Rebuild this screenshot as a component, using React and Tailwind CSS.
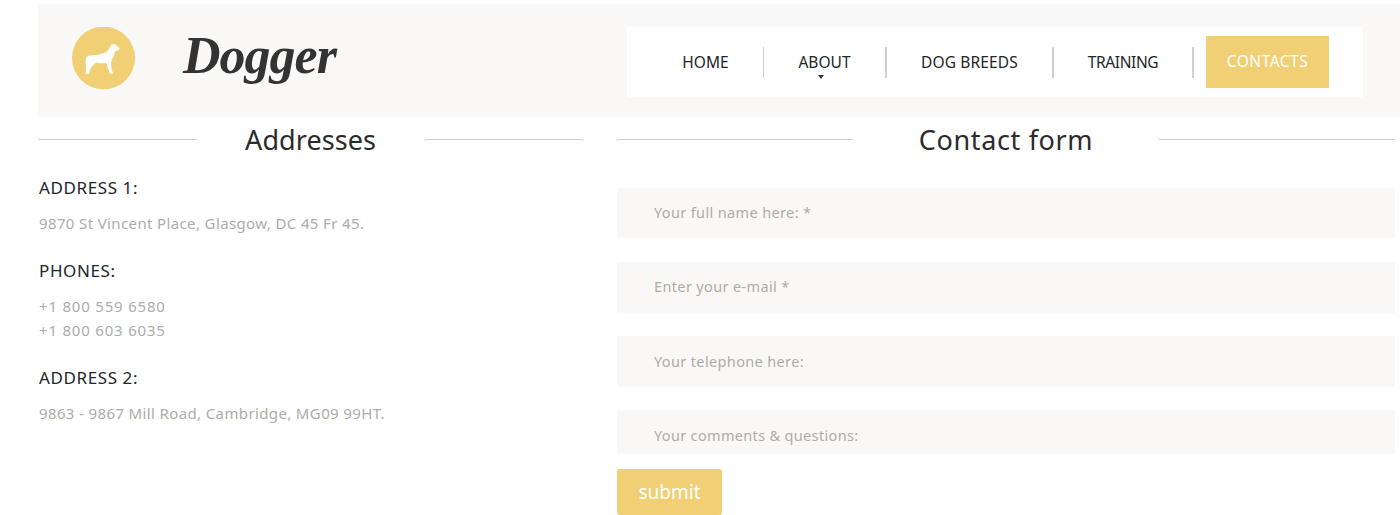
import React from "react";

const bodyFont = "font-['Noto_Sans','DejaVu_Sans',sans-serif]";

function DogLogo() {
  return (
    <svg width="64" height="64" viewBox="0 0 64 64" className="shrink-0">
      <circle cx="31.5" cy="31" r="31.5" fill="#f1cf74" />
      <path
        d="M39.5 17.5 C41.5 16.8 43.5 17.5 44.5 18.8 L47.5 21 C47.8 22.3 46.8 23 45.5 23.3 L43.2 24.2 C42.6 27 41.5 30 39.6 33 C39 36 39 40 39.8 43 L41.3 46.8 L38 46.8 C36.8 44 35.6 40.5 34 36 C31 36.6 27 36.5 24.5 35.2 C22.3 37 19.5 39.5 18.2 42 L17 47 L13.6 47 L14.2 41 C13.6 37 13.4 33.5 14 31 C15 28.8 17 28.3 20 28.2 C26 28.2 32 26.5 35.5 24 C36.8 22 38 19.5 39.5 17.5 Z"
        fill="#ffffff"
      />
    </svg>
  );
}

function NavLink({ label, width, tracking = "", caret }) {
  return (
    <a className={`${width} ${tracking} relative text-center text-[15.5px] leading-[20px] text-[#222529] whitespace-nowrap`}>
      {label}
      {caret && (
        <span className="absolute left-1/2 top-[23px] -ml-[7px] border-x-[3.5px] border-t-[4px] border-x-transparent border-t-[#333]" />
      )}
    </a>
  );
}

function Divider({ width = "w-[2px]" }) {
  return <span className={`${width} h-[31px] bg-[#cfcfcf]`} />;
}

function Heading({ children, gap, tracking }) {
  return (
    <div className="flex items-center h-[44px]">
      <span className="flex-1 h-px bg-[#cccccc]" />
      <h2 className={`${gap} ${tracking} pt-[2px] text-center text-[27px] leading-[44px] text-[#2b2b2b]`}>{children}</h2>
      <span className="flex-1 h-px bg-[#cccccc]" />
    </div>
  );
}

function Field({ placeholder, className }) {
  return (
    <input
      placeholder={placeholder}
      className={`w-full bg-[#f9f8f6] pl-[37px] text-[14.5px] tracking-[0.36px] outline-none placeholder:text-[#aeaca8] ${className}`}
    />
  );
}

export default function App() {
  return (
    <div className={`w-[1400px] h-[515px] overflow-hidden bg-white pt-1 pl-[38px] ${bodyFont}`}>
      <header className="flex items-start h-[113px] bg-[#f9f8f6] pt-[23px] pl-[34px] pr-[37px]">
        <DogLogo />
        <span className="ml-[47px] mt-[3px] font-['Liberation_Serif',serif] font-bold italic text-[52px] leading-none tracking-[-1px] text-[#333333]">
          Dogger
        </span>
        <nav className="ml-auto flex items-center w-[736px] h-[70px] bg-white pl-[21px]">
          <NavLink label="HOME" width="w-[115px]" />
          <Divider width="w-px" />
          <NavLink label="ABOUT" width="w-[121px]" caret />
          <Divider />
          <NavLink label="DOG BREEDS" width="w-[165px]" tracking="tracking-[0.15px]" />
          <Divider />
          <NavLink label="TRAINING" width="w-[138px]" tracking="tracking-[-0.4px]" />
          <Divider />
          <a className="ml-[12px] flex items-center justify-center w-[123px] h-[52px] bg-[#f1cf74] text-[15.5px] tracking-[0.5px] text-white">
            CONTACTS
          </a>
        </nav>
      </header>

      <div className="flex">
        <section className="w-[545px]">
          <Heading gap="w-[228px]" tracking="tracking-[0.05px]">Addresses</Heading>
          <div className="pl-px text-[#222529]">
            <h3 className="mt-[15px] text-[17px] leading-[24px] tracking-[0.6px]">ADDRESS 1:</h3>
            <p className="mt-[11px] text-[15px] leading-[24px] tracking-[0.37px] text-[#aeaca8]">9870 St Vincent Place, Glasgow, DC 45 Fr 45.</p>
            <h3 className="mt-[24px] text-[17px] leading-[24px] tracking-[0.6px]">PHONES:</h3>
            <p className="mt-[11px] text-[15px] leading-[24px] tracking-[0.8px] text-[#aeaca8]">
              +1 800 559 6580
              <br />
              +1 800 603 6035
            </p>
            <h3 className="mt-[24px] text-[17px] leading-[24px] tracking-[0.6px]">ADDRESS 2:</h3>
            <p className="mt-[11px] text-[15px] leading-[24px] tracking-[0.37px] text-[#aeaca8]">9863 - 9867 Mill Road, Cambridge, MG09 99HT.</p>
          </div>
        </section>

        <section className="ml-[34px] w-[778px]">
          <Heading gap="w-[306px]" tracking="tracking-[0.65px]">Contact form</Heading>
          <form className="flex flex-col mt-[27px]" onSubmit={(e) => e.preventDefault()}>
            <Field placeholder="Your full name here: *" className="h-[50px] pb-[2px]" />
            <Field placeholder="Enter your e-mail *" className="h-[51px] mt-[24px] pb-[3px]" />
            <Field placeholder="Your telephone here:" className="h-[51px] mt-[23px] pb-[2px]" />
            <textarea
              placeholder="Your comments & questions:"
              className="w-full h-[44px] mt-[23px] resize-none overflow-hidden bg-[#f9f8f6] pl-[37px] pt-[14px] text-[14.5px] leading-[22px] tracking-[0.33px] outline-none placeholder:text-[#aeaca8]"
            />
            <button className="self-start mt-[15px] w-[105px] h-[46px] rounded-[3px] bg-[#f1cf74] text-[19px] text-white">
              submit
            </button>
          </form>
        </section>
      </div>
    </div>
  );
}
